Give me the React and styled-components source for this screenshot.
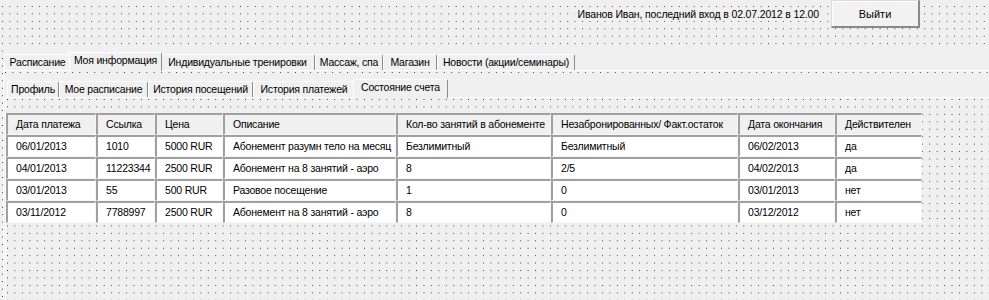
import styled, { createGlobalStyle } from "styled-components";

const GlobalStyle = createGlobalStyle`
  html, body {
    margin: 0;
    padding: 0;
    background: #f0f0f0;
  }
  body {
    font-family: "Liberation Sans", Arial, sans-serif;
    font-size: 10.5px;
    letter-spacing: -0.2px;
    color: #000;
  }
`;

const dots = (x, y) => `
  background-color: #f0f0f0;
  background-image: conic-gradient(at 1px 1px, transparent 75%, #333 0);
  background-size: 7.45px 7.45px;
  background-position: ${x}px ${y}px;
`;

const outerTabs = [
  { label: "Расписание", w: 67 },
  { label: "Моя информация", w: 93, active: true },
  { label: "Индивидуальные тренировки", w: 155 },
  { label: "Массаж, спа", w: 68 },
  { label: "Магазин", w: 54 },
  { label: "Новости (акции/семинары)", w: 138 },
];

const innerTabs = [
  { label: "Профиль", w: 52 },
  { label: "Мое расписание", w: 89 },
  { label: "История посещений", w: 105 },
  { label: "История платежей", w: 102 },
  { label: "Состояние счета", w: 95, active: true },
];

const columns = [
  "Дата платежа",
  "Ссылка",
  "Цена",
  "Описание",
  "Кол-во занятий в абонементе",
  "Незабронированных/ Факт.остаток",
  "Дата окончания",
  "Действителен",
];

const payments = [
  ["06/01/2013", "1010", "5000 RUR", "Абонемент разумн тело на месяц", "Безлимитный", "Безлимитный", "06/02/2013", "да"],
  ["04/01/2013", "11223344", "2500 RUR", "Абонемент на 8 занятий - аэро", "8", "2/5", "04/02/2013", "да"],
  ["03/01/2013", "55", "500 RUR", "Разовое посещение", "1", "0", "03/01/2013", "нет"],
  ["03/11/2012", "7788997", "2500 RUR", "Абонемент на 8 занятий - аэро", "8", "0", "03/12/2012", "нет"],
];

const TabBar = ({ tabs, compact }) => (
  <Strip compact={compact}>
    {tabs.map((t) => (
      <Tab key={t.label} w={t.w} active={t.active}>
        {t.label}
      </Tab>
    ))}
  </Strip>
);

export default function App() {
  return (
    <>
      <GlobalStyle />
      <Form>
        <Header>
          <UserLabel>Иванов Иван, последний вход в 02.07.2012 в 12.00</UserLabel>
          <LogoutButton>Выйти</LogoutButton>
        </Header>
        <OuterControl>
          <TabBar tabs={outerTabs} />
          <OuterPage>
            <InnerControl>
              <TabBar tabs={innerTabs} compact />
              <InnerPage>
                <Grid>
                  {columns.map((c) => (
                    <Cell key={c} head>
                      {c}
                    </Cell>
                  ))}
                  {payments.map((row, i) =>
                    row.map((v, j) => <Cell key={i + "-" + j}>{v}</Cell>)
                  )}
                </Grid>
              </InnerPage>
            </InnerControl>
          </OuterPage>
        </OuterControl>
      </Form>
    </>
  );
}

const Form = styled.div`
  width: 989px;
  height: 300px;
  overflow: hidden;
  display: flex;
  flex-direction: column;
  ${dots(2, 6)}
`;

const Header = styled.div`
  height: 46px;
  flex-shrink: 0;
  display: flex;
  justify-content: flex-end;
  align-items: flex-start;
  padding-right: 69px;
`;

const UserLabel = styled.div`
  margin-top: 7px;
  margin-right: 9px;
  padding: 0 3px;
  height: 14px;
  line-height: 14px;
  font-size: 10.5px;
  letter-spacing: -0.15px;
  background: #f0f0f0;
  white-space: nowrap;
`;

const LogoutButton = styled.button`
  box-sizing: border-box;
  width: 89px;
  height: 28px;
  margin: 0;
  padding: 0;
  font: inherit;
  font-size: 11px;
  color: #000;
  background: #f2f2f2;
  border-style: solid;
  border-width: 1px 2px 2px 1px;
  border-color: #dcdcdc #8a8a8a #8a8a8a #dcdcdc;
  box-shadow: inset 1px 1px #fff;
`;

const OuterControl = styled.div`
  flex: 1;
  display: flex;
  flex-direction: column;
  margin-left: 3px;
  min-height: 0;
`;

const Strip = styled.div`
  height: ${(p) => (p.compact ? 22 : 24)}px;
  flex-shrink: 0;
  display: flex;
  align-items: flex-end;
  padding-left: ${(p) => (p.compact ? 2 : 1)}px;
  background: #f0f0f0;
`;

const Tab = styled.div`
  box-sizing: border-box;
  width: ${(p) => p.w}px;
  height: ${(p) => (p.active ? 19 : 16)}px;
  margin: 0 ${(p) => (p.active ? -2 : 0)}px ${(p) => (p.active ? -1 : 0)}px;
  padding-top: 1px;
  position: relative;
  z-index: ${(p) => (p.active ? 1 : 0)};
  background: #f0f0f0;
  border-top: 1px solid #fff;
  border-left: 1px solid #fff;
  border-right: 1px solid #8c8c8c;
  border-radius: 2px 2px 0 0;
  text-align: center;
  line-height: 13px;
  white-space: nowrap;
`;

const OuterPage = styled.div`
  flex: 1;
  display: flex;
  flex-direction: column;
  border-top: 1px solid #fff;
  border-left: 1px solid #fff;
  padding: 4px 0 0 1px;
  min-height: 0;
  ${dots(1, 1)}
`;

const InnerControl = styled.div`
  flex: 1;
  display: flex;
  flex-direction: column;
  min-height: 0;
`;

const InnerPage = styled.div`
  flex: 1;
  border-top: 1px solid #fff;
  border-left: 1px solid #fff;
  padding-top: 15px;
  ${dots(1, 1)}
`;

const Grid = styled.div`
  display: grid;
  grid-template-columns: 90px 59px 68px 173px 155px 187px 97px 87px;
  grid-auto-rows: 22px;
  width: 916px;
`;

const Cell = styled.div`
  box-sizing: border-box;
  padding-left: 8px;
  background: ${(p) => (p.head ? "#f0f0f0" : "#fff")};
  border-style: solid;
  border-width: 2px 1px 1px 2px;
  border-color: #a0a0a0 #f6f6f6 #f6f6f6 #a0a0a0;
  line-height: 19px;
  white-space: nowrap;
  overflow: hidden;
`;
